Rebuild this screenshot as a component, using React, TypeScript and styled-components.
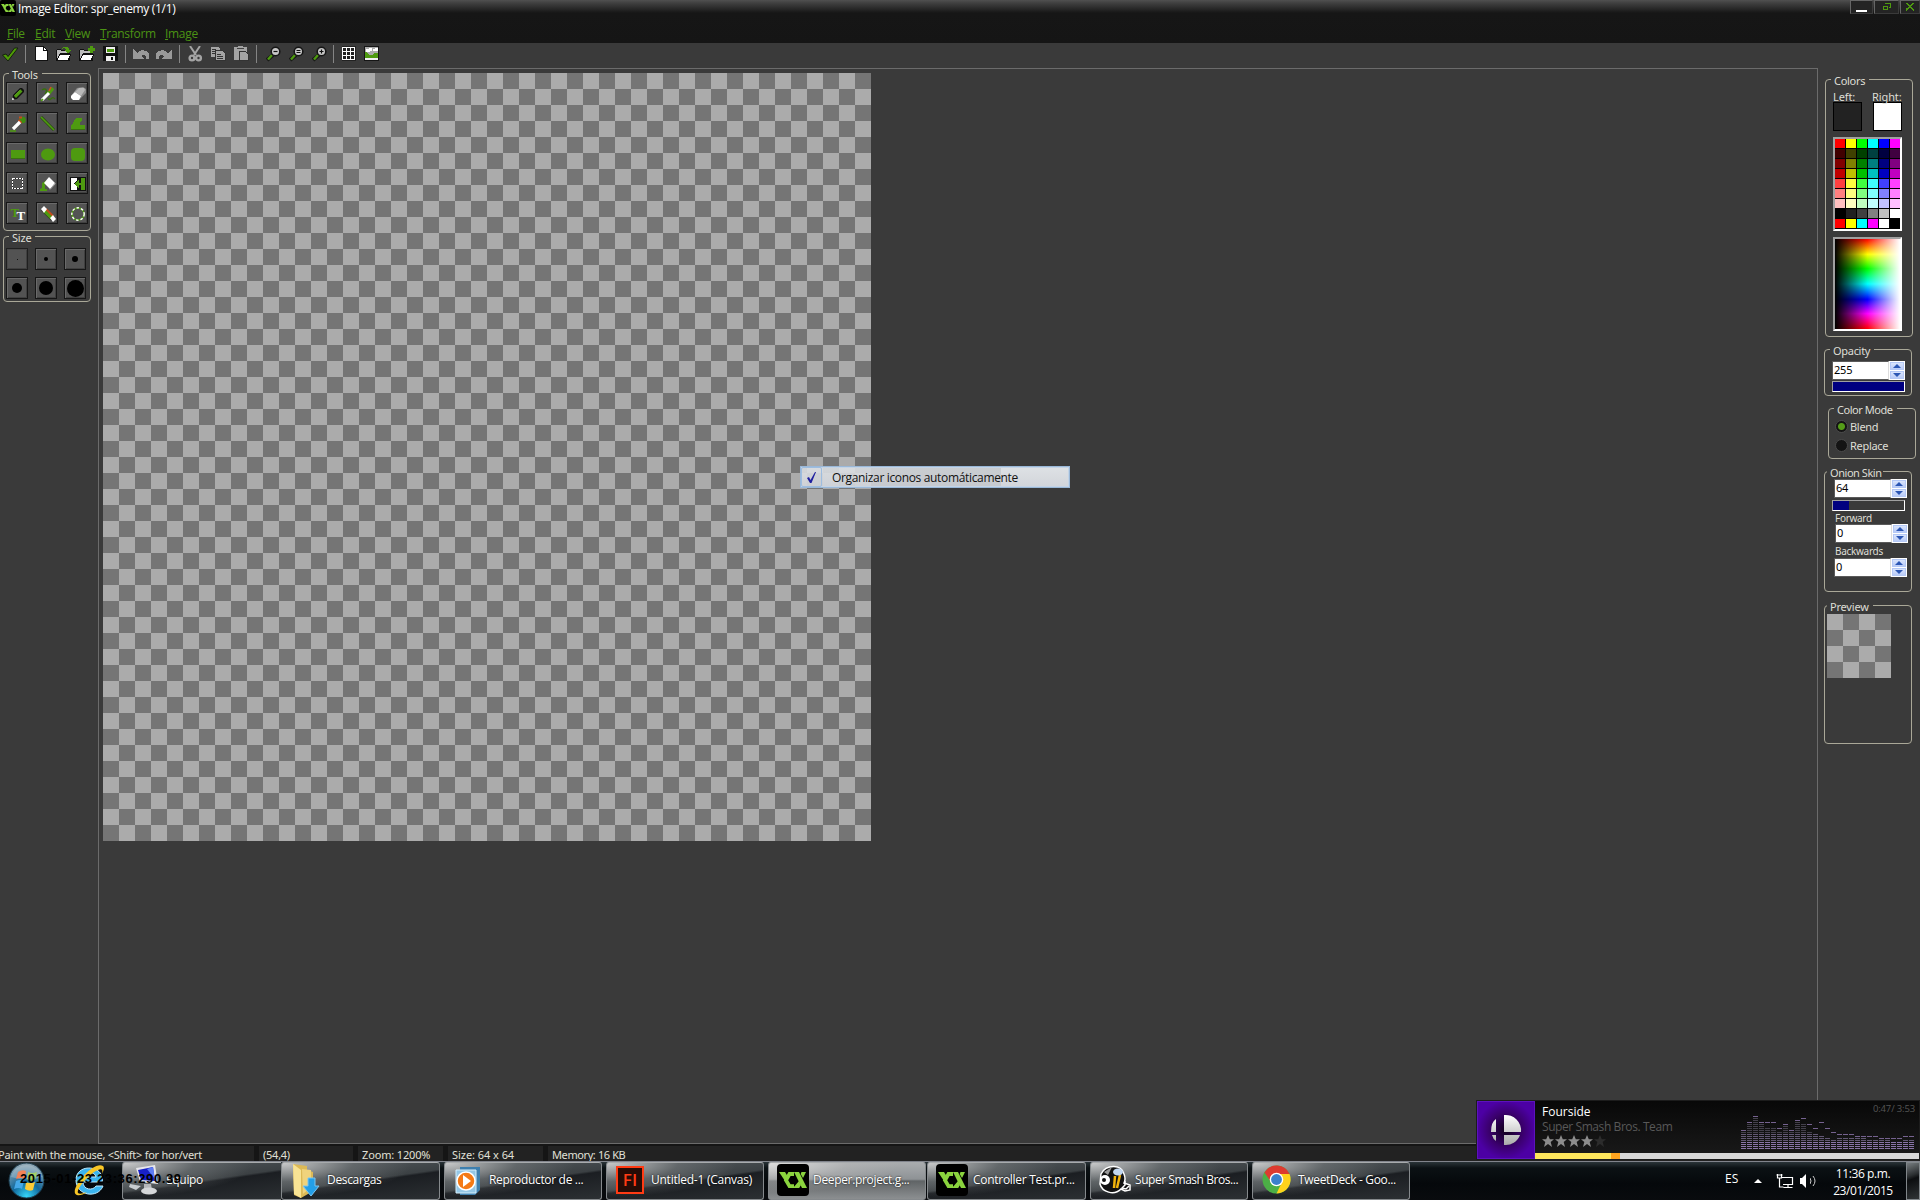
import React from "react";
import styled, { createGlobalStyle, css } from "styled-components";

const segoe = `"Open Sans", "Noto Sans", sans-serif`;
const tahoma = `"Noto Sans", "Open Sans", sans-serif`;

const Global = createGlobalStyle`
  * { box-sizing: border-box; }
  html, body { margin: 0; padding: 0; background: #3a3a3a; overflow: hidden; }
  svg { display: block; flex: none; }
`;

const Screen = styled.div`
  position: relative;
  display: flex;
  flex-direction: column;
  width: 1920px;
  height: 1200px;
  background: #3a3a3a;
  overflow: hidden;
  font-family: ${segoe};
  font-size: 12px;
  white-space: nowrap;
`;

/* ---------- title and menu ---------- */

const Header = styled.header`
  height: 43px;
  background: linear-gradient(#505050 0, #404040 3px, #161616 13px, #151515 100%);
`;
const TitleBar = styled.div`
  display: flex;
  height: 20px;
`;
const TitleText = styled.div`
  flex: 1;
  padding-left: 2px;
  color: #fff;
  font-size: 12px;
  line-height: 18px;
  letter-spacing: -0.32px;
`;
const WindowButton = styled.div<{ $w: number }>`
  width: ${(p) => p.$w}px;
  height: 14px;
  margin-right: ${(p) => (p.$w === 20 ? 0 : 1)}px;
  display: flex;
  align-items: center;
  justify-content: center;
  background: #242424;
  border: 1px solid #3a3a3a;
  border-top-color: #666;
  border-left-color: #666;
`;
const MenuBar = styled.nav`
  display: flex;
  height: 23px;
  padding: 4px 0 0 7px;
  color: #4c9414;
  line-height: 19px;
`;
const MenuItem = styled.div<{ $w: number }>`
  width: ${(p) => p.$w}px;
  letter-spacing: -0.3px;
  &::first-letter { text-decoration: underline; }
`;

/* ---------- toolbar ---------- */

const Toolbar = styled.div`
  display: flex;
  align-items: flex-start;
  height: 25px;
  padding: 3px 0 0 1px;
`;
const ToolbarSlot = styled.div<{ $w: number }>`
  width: ${(p) => p.$w}px;
`;
const Separator = styled.div<{ $after: number }>`
  width: 1px;
  height: 18px;
  margin: -1px ${(p) => p.$after}px 0 0;
  background: #858585;
`;

/* ---------- work area ---------- */

const Body = styled.div`
  display: flex;
  height: 1076px;
`;
const LeftPanel = styled.aside`
  width: 98px;
  padding: 5px 0 0 3px;
  display: flex;
  flex-direction: column;
  gap: 5px;
`;
const checker = css`
  background: repeating-conic-gradient(#757575 0 25%, #ababab 0 50%) 0 0 / 32px 32px;
`;
const Workspace = styled.main`
  flex: 1;
  border: 1px solid #6b6b6b;
  padding: 4px;
`;
const Canvas = styled.div`
  width: 768px;
  height: 768px;
  ${checker}
`;
const RightPanel = styled.aside`
  width: 102px;
  padding: 11px 0 0 6px;
  font-family: ${tahoma};
  font-size: 11px;
  color: #deded6;
`;

const Group = styled.section<{ $h: number; $w?: number; $top?: number; $left?: number }>`
  position: relative;
  width: ${(p) => p.$w ?? 88}px;
  height: ${(p) => p.$h}px;
  margin: ${(p) => p.$top ?? 0}px 0 0 ${(p) => p.$left ?? 0}px;
  border: 1px solid #aaa898;
  border-radius: 4px;
`;
const Legend = styled.div<{ $x: number; $pr?: number; $ls?: number }>`
  position: absolute;
  left: ${(p) => p.$x}px;
  top: -6px;
  height: 13px;
  padding: 0 ${(p) => p.$pr ?? 4}px 0 3px;
  background: #3a3a3a;
  color: #deded6;
  font: 11px/13px ${tahoma};
  letter-spacing: ${(p) => p.$ls ?? -0.2}px;
`;

const ButtonGrid = styled.div<{ $gap: number; $top: number }>`
  display: grid;
  grid-template-columns: repeat(3, 22px);
  column-gap: ${(p) => p.$gap}px;
  row-gap: ${(p) => p.$gap}px;
  padding: ${(p) => p.$top}px 0 0 2px;
`;
const ToolButton = styled.div<{ $on?: boolean; $nudge?: boolean }>`
  width: 22px;
  height: 22px;
  display: flex;
  align-items: center;
  justify-content: center;
  padding: ${(p) => (p.$nudge ? "1px 0 0 2px" : "0")};
  background: #535353;
  border: 1px solid ${(p) => (p.$on ? "#202020" : "#161616")};
  box-shadow: inset 1px 1px 0 ${(p) => (p.$on ? "#4a4a4a" : "#6a6a6a")}, inset -1px -1px 0 #404040;
`;
const Dot = styled.div<{ $d: number }>`
  width: ${(p) => p.$d}px;
  height: ${(p) => p.$d}px;
  border-radius: 50%;
  background: #000;
`;

/* ---------- colour group ---------- */

const ColorsInner = styled.div`
  padding: 10px 0 0 7px;
`;
const SwatchRow = styled.div`
  display: flex;
  gap: 11px;
`;
const SwatchCell = styled.div`
  width: 29px;
  line-height: 13px;
  font-size: 11px;
  letter-spacing: -0.1px;
`;
const SwatchLabel = styled.div<{ $shift?: boolean }>`
  height: 12px;
  ${(p) => p.$shift && "margin-left: -1px;"}
`;
const Swatch = styled.div<{ $c: string }>`
  width: 29px;
  height: 29px;
  background: ${(p) => p.$c};
  border: 1px solid #000;
`;
const Sunken = styled.div<{ $mt: number }>`
  width: 69px;
  height: 94px;
  margin-top: ${(p) => p.$mt}px;
  border: 2px solid #fff;
  border-top-color: #a0a0a0;
  border-left-color: #a0a0a0;
`;
const Palette = styled.div`
  display: grid;
  grid-template-columns: repeat(6, 10px);
  grid-template-rows: repeat(9, 9px);
  gap: 1px;
  height: 90px;
  background: #000;
`;
const Cell = styled.div<{ $c: string }>`
  background: ${(p) => p.$c};
`;
const Spectrum = styled.div`
  height: 90px;
  background: linear-gradient(90deg, rgba(255, 255, 255, 0) 50%, #fff),
    linear-gradient(90deg, #000, rgba(0, 0, 0, 0) 50%),
    linear-gradient(#f00, #ff0 17%, #0f0 33%, #0ff 50%, #00f 67%, #f0f 83%, #f00);
`;

/* ---------- numeric fields ---------- */

const Field = styled.div<{ $top: number; $left: number }>`
  display: flex;
  width: 74px;
  height: 19px;
  margin: ${(p) => p.$top}px 0 0 ${(p) => p.$left}px;
`;
const Input = styled.div`
  width: 57px;
  height: 19px;
  padding-left: 1px;
  background: #fff;
  border: 1px solid #5a5a5a;
  border-right-color: #ddd;
  color: #000;
  font: 11px/16px ${tahoma};
  letter-spacing: -0.2px;
`;
const Spinner = styled.div`
  width: 16px;
  height: 19px;
  background: #fff;
  padding: 1px;
  display: flex;
  flex-direction: column;
  gap: 1px;
`;
const SpinButton = styled.div`
  flex: 1;
  display: flex;
  align-items: center;
  justify-content: center;
  border: 1px solid #b4c8f6;
  background: linear-gradient(#d9e4fc, #b9cbf7);
`;
const Bar = styled.div<{ $top: number }>`
  width: 73px;
  height: 11px;
  margin: ${(p) => p.$top}px 0 0 7px;
  border: 1px solid #fff;
  border-top-color: #a0a0a0;
  border-left-color: #a0a0a0;
`;
const BarFill = styled.div<{ $w: number }>`
  width: ${(p) => p.$w}px;
  height: 9px;
  background: #000080;
`;
const SmallLabel = styled.div<{ $top: number }>`
  height: 12px;
  margin: ${(p) => p.$top}px 0 0 10px;
  font-size: 10px;
  line-height: 11px;
  letter-spacing: -0.3px;
`;
const RadioRow = styled.div<{ $top: number }>`
  display: flex;
  align-items: center;
  gap: 2px;
  height: 14px;
  margin: ${(p) => p.$top}px 0 0 6px;
  letter-spacing: -0.3px;
`;
const Radio = styled.div<{ $on?: boolean }>`
  width: 13px;
  height: 13px;
  border-radius: 50%;
  border: 1px solid #4a4a4a;
  background: ${(p) => (p.$on ? "radial-gradient(circle, #549c18 0 3px, #141414 4px)" : "#141414")};
`;
const PreviewChecker = styled.div`
  width: 64px;
  height: 64px;
  margin: 8px 0 0 2px;
  ${checker}
`;

/* ---------- status bar ---------- */

const StatusBar = styled.footer`
  display: flex;
  height: 17px;
  padding-top: 2px;
  background: #151515;
  gap: 5px;
`;
const StatusCell = styled.div<{ $w?: number; $pad: number; $ls?: number }>`
  ${(p) => (p.$w ? `width: ${p.$w}px;` : "flex: 1;")}
  padding-left: ${(p) => p.$pad}px;
  text-indent: ${(p) => (p.$pad ? 0 : -2)}px;
  background: #222;
  color: #e0e0d8;
  font: 11px/17px ${tahoma};
  height: 15px;
  letter-spacing: ${(p) => p.$ls ?? -0.25}px;
`;

/* ---------- taskbar ---------- */

const Taskbar = styled.div`
  display: flex;
  height: 39px;
  background: linear-gradient(#2a3438, #0b1114 6px, #05080b 22px, #090b0e);
  border-top: 1px solid #81848c;
`;
const Launchers = styled.div`
  display: flex;
  width: 122px;
  height: 38px;
  padding: 0 0 2px 8px;
  gap: 27px;
  align-items: center;
`;
const Task = styled.div<{ $w: number; $gap?: number; $active?: boolean; $join?: boolean; $lead?: number }>`
  display: flex;
  align-items: center;
  width: ${(p) => p.$w}px;
  height: 38px;
  margin-right: ${(p) => p.$gap ?? 4}px;
  padding: 0 0 3px ${(p) => p.$lead ?? 9}px;
  border: 1px solid #85898c;
  border-top-color: #a8abad;
  ${(p) => p.$join && "border-right: 0;"}
  border-radius: ${(p) => (p.$join ? "3px 0 0 3px" : "3px")};
  color: #fff;
  background: ${(p) =>
    p.$active
      ? "radial-gradient(ellipse 130px 30px at 0 0, #ddd 0, rgba(190,190,190,.4) 60%, transparent), linear-gradient(#a9acae, #8e9295 45%, #606466 50%, #8c8f91)"
      : "radial-gradient(ellipse 130px 34px at 0 0, rgba(220,220,220,.85) 0, rgba(120,124,126,.5) 55%, transparent), linear-gradient(172deg, #596064 0, #3b4043 49%, #1b1e22 53%, #2c3033)"};
`;
const TaskIcon = styled.div<{ $w: number }>`
  width: ${(p) => p.$w}px;
`;
const TaskLabel = styled.div<{ $ls?: number }>`
  letter-spacing: ${(p) => p.$ls ?? -0.33}px;
  text-shadow: 0 0 2px #000;
`;
const Tray = styled.div`
  margin-left: auto;
  display: flex;
  align-items: center;
  color: #fff;
`;
const Language = styled.div`
  width: 29px;
  margin-top: -6px;
`;
const Clock = styled.div`
  width: 76px;
  margin: 1px 5px 0 7px;
  text-align: center;
  line-height: 17px;
  letter-spacing: -0.4px;
`;
const ShowDesktop = styled.div`
  width: 14px;
  height: 38px;
  border: 1px solid #80868a;
  background: linear-gradient(160deg, #777d80 0, #2a2e30 35%, #0c0e10 45%, #303436);
`;

/* ---------- overlays ---------- */

const ContextMenu = styled.div`
  position: absolute;
  left: 800px;
  top: 466px;
  width: 270px;
  height: 22px;
  display: flex;
  border: 1px solid #9ab8d8;
  background: linear-gradient(rgba(222, 226, 230, 0.88), rgba(209, 212, 218, 0.93)),
    linear-gradient(#ddd, #ddd) 200px 0 no-repeat;
  color: #111;
  line-height: 21px;
  box-shadow: inset 0 0 0 1px #c4d4e6;
`;
const MenuCheck = styled.div`
  width: 21px;
  height: 20px;
  margin-right: 10px;
  display: flex;
  align-items: center;
  justify-content: center;
  border: 1px solid #9dbde0;
  border-radius: 2px;
`;
const MenuLabel = styled.div`
  letter-spacing: -0.34px;
`;
const Stamp = styled.div`
  position: absolute;
  left: 20px;
  top: 1170px;
  color: #000;
  font: 700 13px/17px "Liberation Sans", sans-serif;
  letter-spacing: 0.62px;
`;
const Player = styled.div`
  position: absolute;
  left: 1476px;
  top: 1100px;
  width: 444px;
  height: 60px;
  display: flex;
  padding: 1px;
  background: #1c1c1c;
`;
const PlayerMain = styled.div`
  flex: 1;
  display: flex;
  flex-direction: column;
  background: linear-gradient(#080808, #1a1a1a);
`;
const PlayerInfo = styled.div`
  display: flex;
  height: 52px;
`;
const TrackText = styled.div`
  flex: 1;
  padding: 3px 0 0 7px;
  line-height: 15px;
  color: #fff;
`;
const Artist = styled.div`
  height: 16px;
  color: #585858;
  letter-spacing: -0.42px;
`;
const PlayerRight = styled.div`
  width: 178px;
  display: flex;
  flex-direction: column;
  align-items: flex-end;
  padding: 1px 4px 0 0;
  color: #555;
  font-size: 9.5px;
  line-height: 14px;
  letter-spacing: -0.15px;
`;
const Progress = styled.div`
  height: 6px;
  background: linear-gradient(90deg, #fee65c 76px, #ffa51f 76px 85px, #d8d8d8 85px);
`;

/* ---------- icons ---------- */

const G = "#4e9a10";
type IconProps = { children: React.ReactNode; w?: number; h?: number; smooth?: boolean };
const Icon = ({ children, w = 16, h = 16, smooth }: IconProps) => (
  <svg width={w} height={h} viewBox={`0 0 ${w} ${h}`} shapeRendering={smooth ? "auto" : "crispEdges"} fill="none">
    {children}
  </svg>
);

const GmLogo = ({ size }: { size: number }) => (
  <svg width={size} height={size} viewBox="0 0 32 32" fill="none">
    <rect width="32" height="32" rx="4" fill="#000" />
    <path d="M2 8h6l2.500 4L8 17z" fill="#8ad33e" />
    <path d="M17 10h-4.500L9 16.200l3.500 6H17" stroke="#8ad33e" strokeWidth="3.800" />
    <path d="M17 8h5l8 16h-5z" fill="#8ad33e" />
    <path d="M24.500 8H29l-3 6-2.300-4zM22 17l2 4-1.800 3H16z" fill="#8ad33e" />
  </svg>
);

const Magnifier = ({ mark }: { mark: string }) => (
  <Icon smooth>
    <path d="M7 9 1 14" stroke="#161616" strokeWidth="4" />
    <path d="M6 9 2 13.500" stroke={G} strokeWidth="2.400" />
    <circle cx="9.500" cy="5.500" r="4.300" fill="#c8c8c8" stroke="#161616" strokeWidth="1.600" />
    <path d={mark} stroke="#111" strokeWidth="1.200" />
  </Icon>
);

const Folder = ({ children }: { children: React.ReactNode }) => (
  <Icon>
    <path d="M0 4h1V3h4v1h7v3h2v8H1v-1H0z" fill="#111" />
    <path d="M1 4h4v1h6v2H4L2 12H1z" fill="#bbb" />
    <path d="M4 8h11l-3 6H1z" fill="#fff" stroke="#111" />
    {children}
  </Icon>
);

const icons = {
  check: (
    <Icon w={18} smooth>
      <path d="M1.500 9 5 8l2 2.500L13.500 2H17L7 15z" fill="#4e9a06" stroke="#162010" />
    </Icon>
  ),
  file: (
    <Icon w={13}>
      <path d="M.5.500h8l4 4v10H.5z" fill="#fff" stroke="#111" />
      <path d="M8.500.500v4h4" stroke="#111" />
    </Icon>
  ),
  open: (
    <Folder>
      <path d="M6 2c3-3 7-1 7 2h2l-3 4-4-4h2c0-2-2-2-4-1z" fill={G} />
    </Folder>
  ),
  add: (
    <Folder>
      <path d="M11 0h3v2h2v3h-2v2h-3V5H9V2h2z" fill={G} />
    </Folder>
  ),
  save: (
    <Icon>
      <path d="M0 0h14l1 1v14H0z" fill="#111" />
      <path d="M3 1h9v6H3zM3 10h9v5H3z" fill="#eee" />
      <path d="M4 3h7v3H4z" fill={G} />
      <path d="M8 11h2v3H8z" fill="#111" />
    </Icon>
  ),
  undo: (
    <Icon>
      <path d="M0 3l4 4c3-4 10-4 12 1v5h-3c1-3-2-5-5-3l3 3H0z" fill="#999" />
    </Icon>
  ),
  redo: (
    <Icon>
      <path d="M16 3l-4 4C9 3 2 3 0 8v5h3c-1-3 2-5 5-3l-3 3h11z" fill="#999" />
    </Icon>
  ),
  cut: (
    <Icon smooth>
      <path d="M2 0l6 9M12 0L6 9" stroke="#a4a4a4" strokeWidth="2" />
      <circle cx="4" cy="12" r="2.400" stroke="#a4a4a4" strokeWidth="2.400" />
      <circle cx="10.500" cy="12" r="2.400" stroke="#a4a4a4" strokeWidth="2.400" />
    </Icon>
  ),
  copy: (
    <Icon>
      <path d="M.5.500h7l2 2v8h-9z" fill="#a4a4a4" />
      <path d="M5.500 4.500h7l3 3v7h-10z" fill="#a4a4a4" stroke="#333" />
      <path d="M2 3.500h4M2 5.500h3M2 7.500h3M7 8.500h4M7 10.500h6M7 12.500h6" stroke="#333" />
    </Icon>
  ),
  paste: (
    <Icon>
      <path d="M0 1h4V0h5v1h4v13H0z" fill="#a4a4a4" />
      <path d="M3 2.500h7" stroke="#444" />
      <path d="M5.500 5.500h6l3 3v6h-9z" fill="#a4a4a4" stroke="#333" />
    </Icon>
  ),
  grid: (
    <Icon>
      <path d="M1 0h14v15H1z" fill="#222" />
      <path d="M1.500 1v13M5.500 1v13M9.500 1v13M13.500 1v13M1 1.500h13M1 5.500h13M1 9.500h13M1 13.500h13" stroke="#fff" />
    </Icon>
  ),
  image: (
    <Icon>
      <path d="M0 0h15v15H0z" fill="#151515" />
      <path d="M1 1h13v10H1z" fill="#aaa" />
      <path d="M2 3h3V2h3v3H6v1H2zM9 3h2V2h3v3H9z" fill="#fff" />
      <path d="M1 6h2l2 3h3l3-2h3v5H1z" fill={G} />
      <path d="M1 12h13v2H1z" fill="#eee" />
    </Icon>
  ),
};

const tools: React.ReactNode[] = [
  <Icon smooth>
    <path d="M2 14l1-5 7-7h2l2 2v2l-7 7z" fill="#111" />
    <path d="M4 10 10.500 3.500l2 2L6 12z" fill={G} />
    <path d="M4.500 9.700 10.500 3.700" stroke="#6aba24" strokeWidth=".8" />
    <path d="M2 14l.5-2.500 2 2z" fill="#fff" />
  </Icon>,
  <Icon smooth>
    <path d="M2 4c4-3 6 1 3 4M8 12c1 3 3 1 4 0s2 0 3 1" stroke="#37700c" strokeWidth="1.400" />
    <path d="M8 8 13 2" stroke={G} strokeWidth="3.600" />
    <path d="M11 1l-2 4" stroke="#d05020" strokeWidth="1.500" />
    <path d="M2 14 9 7" stroke="#fff" strokeWidth="3" />
    <path d="M1 15l2-2" stroke={G} strokeWidth="1.600" />
  </Icon>,
  <Icon smooth>
    <path d="M1 10 7 2l6-1 3 2v4l-7 7H4z" fill="#8c8c8c" />
    <path d="M1 10 5 6l6 4-2 4H3l-2-2z" fill="#fff" />
    <path d="M5 6l4-4h5l1 2-4 6z" fill="#b8b8b8" />
  </Icon>,
  <Icon smooth>
    <circle cx="12.500" cy="4" r="3.200" fill="#3f8c10" />
    <path d="M9 1.500h3M8.500 4l3 3" stroke="#c54b1c" strokeWidth="2" />
    <path d="M3 13 10 6" stroke="#fff" strokeWidth="3.200" />
    <path d="M0 15h6" stroke={G} strokeWidth="1.500" />
  </Icon>,
  <Icon smooth>
    <path d="M1 1 14 14" stroke="#294b10" strokeWidth="3" />
    <path d="M1 1 14 14" stroke={G} strokeWidth="1.700" />
  </Icon>,
  <Icon>
    <path d="M1 14V10l5-8h6v2l-2 3v2h5v5z" fill={G} />
    <path d="M1 13.500h14" stroke="#39700f" />
  </Icon>,
  <Icon>
    <path d="M1 4h14v9H1z" fill={G} />
    <path d="M1 12.500h14" stroke="#39700f" />
  </Icon>,
  <Icon smooth>
    <ellipse cx="8" cy="8.500" rx="7" ry="6" fill={G} />
  </Icon>,
  <Icon smooth>
    <rect x="1" y="2" width="14" height="13" rx="4" fill={G} />
  </Icon>,
  <Icon>
    <path d="M2.500 2.500h10v10h-10z" stroke="#222" />
    <path d="M2.500 2.500h10v10h-10z" stroke="#fff" strokeDasharray="2 1" />
  </Icon>,
  <Icon smooth>
    <path d="M0 15v-2l2-1V7l5-3v3L5 9v4h2v2z" fill={G} />
    <path d="M4 7 9 1l6 6-5 6z" fill="#fff" />
    <path d="M10 13.500l5.500-6" stroke="#aaa" />
  </Icon>,
  <Icon>
    <path d="M0 1h16v14H0z" fill="#111" />
    <path d="M1 2h6v2L4 8l3 3v3H1z" fill="#fff" />
    <path d="M4 8l5-4v3h2V2h4v12h-4V9H9v3z" fill={G} />
  </Icon>,
  <Icon w={18} smooth>
    <text x="1.500" y="11" fontFamily="Liberation Serif" fontWeight="700" fontSize="13" fill={G}>T</text>
    <text x="7.500" y="14" fontFamily="Liberation Serif" fontWeight="700" fontSize="13" fill="#fff">T</text>
  </Icon>,
  <Icon smooth>
    <path d="M3 3l10 10" stroke="#222" strokeWidth="5" />
    <path d="M4 4l8 8" stroke={G} strokeWidth="4" />
    <path d="M6 3l7 7" stroke="#c54b1c" strokeWidth="1.800" />
    <path d="M1 3l3-3 3 3-3 4zM10 12l3-3 3 4-3 3z" fill="#fff" />
  </Icon>,
  <Icon smooth>
    <circle cx="8" cy="8" r="6" stroke={G} strokeWidth="1.500" />
    <circle cx="8" cy="8" r="6.200" stroke="#fff" strokeWidth="1.400" strokeDasharray="2.500 2" />
  </Icon>,
];

const StartOrb = () => (
  <svg width="37" height="37" viewBox="0 0 37 37">
    <defs>
      <radialGradient id="orb" cx=".5" cy=".95" r=".9">
        <stop offset="0" stopColor="#35d7fa" />
        <stop offset=".45" stopColor="#12689c" />
        <stop offset="1" stopColor="#8ba4b2" />
      </radialGradient>
    </defs>
    <circle cx="18.500" cy="18.500" r="17.500" fill="url(#orb)" stroke="#1c3a4a" />
    <path d="M10 10q4-3 8-1l-1 8q-4-2-9 0z" fill="#f0602a" />
    <path d="M20 10q4 2 9 0l-2 8q-4 2-8-1z" fill="#8dc63c" />
    <path d="M8 19q4-2 8 0l-2 8q-3-2-8 0z" fill="#45a8e8" />
    <path d="M18 20q4 2 9 0l-2 8q-4 2-8-1z" fill="#fdcb35" />
    <path d="M3 15a16 16 0 0 1 31 0q-15 5-31 0z" fill="#fff" opacity=".22" />
  </svg>
);
const Explorer = () => (
  <svg width="34" height="36" viewBox="0 0 34 36" fill="none">
    <path d="M27 20H11c0 8 10 9 13 4h7c-5 13-27 10-27-6S28 3 30 15c.5 2 .5 4 0 5zM12 15h12c-1-6-11-6-12 0z" fill="#3bb4ee" stroke="#bfeaff" />
    <path d="M5 33C-5 30 21-2 31 4c2 2 0 6-1 8 1-4 0-6-4-4C16 12 4 28 6 31q2 2 9-1-6 4-10 3z" fill="#f8c626" />
  </svg>
);
const Computer = () => (
  <svg width="34" height="34" viewBox="0 0 34 34">
    <path d="M7 5l19-3 3 19-18-2z" fill="#e6e6ea" />
    <path d="M9 7l15-3 2 14-14-1z" fill="#1820c8" />
    <path d="M18 6l6-2 2 12z" fill="#5d7df4" />
    <path d="M15 21h7l1 6h-8z" fill="#b6b8bb" />
    <ellipse cx="20" cy="28" rx="8" ry="3.500" fill="#d5d7d9" />
    <path d="M1 21l11 2-5 4-7-3z" fill="#c8ccd0" />
  </svg>
);
const Downloads = () => (
  <svg width="34" height="38" viewBox="0 0 34 38">
    <path d="M3 3l14 2v4l6 2v19l-12 7-7-3z" fill="#dcb956" />
    <path d="M3 3l8 6v28l-7-4z" fill="#f8e394" />
    <path d="M12 8l9 1v17l-8 7z" fill="#f0d37c" />
    <path d="M18 17h7v8h4l-8 10-8-10h5z" fill="#239fe8" stroke="#7cc4f0" />
  </svg>
);
const MediaPlayer = () => (
  <svg width="28" height="32" viewBox="0 0 28 32">
    <path d="M6 3h20v23l-5 5H6z" fill="#3e7fae" />
    <path d="M2 6h20v23H2z" fill="#94c7e6" stroke="#d5effc" />
    <circle cx="12" cy="17" r="9" fill="#f47a16" stroke="#fff" strokeWidth="1.500" />
    <path d="M9 11l8 6-8 6z" fill="#fff" />
  </svg>
);
const FlBox = styled.div`
  width: 28px;
  height: 28px;
  border: 2px solid #ff3b14;
  background: #260c06;
  color: #ff3b14;
  font: 600 17px/23px "Open Sans", sans-serif;
  text-align: center;
  letter-spacing: 0.3px;
`;
const Bee = () => (
  <svg width="34" height="32" viewBox="0 0 34 32" fill="none">
    <path d="M3 10C8 0 24 0 26 10q2 5 0 9l6 2v5l-5 1-4-2C16 32 4 28 2 20z" fill="#111" stroke="#fff" strokeWidth="1.500" />
    <path d="M6 8l8-5-4 8z" fill="#999" />
    <path d="M17 12l-1 12M22 11l-3 13" stroke="#f2b40c" strokeWidth="2.500" />
    <ellipse cx="20" cy="8" rx="5" ry="3.500" fill="#c2d7f0" />
    <circle cx="7" cy="16" r="5" fill="#fff" />
    <circle cx="6" cy="16" r="2" fill="#111" />
    <path d="M27 17v4l-3 3 4 1 3-3" stroke="#fff" strokeWidth="1.500" />
  </svg>
);
const Chrome = () => (
  <svg width="29" height="29" viewBox="0 0 29 29">
    <circle cx="14.500" cy="14.500" r="14" fill="#4caf46" />
    <path d="M2.500 7.500A14 14 0 0 1 27.500 9h-13L9 17z" fill="#dd3a30" />
    <path d="M27.500 9a14 14 0 0 1-13 19.500L20 17 16 9z" fill="#fed21b" />
    <circle cx="14.500" cy="14.500" r="6.800" fill="#fff" />
    <circle cx="14.500" cy="14.500" r="5.400" fill="#3b80cc" />
  </svg>
);
const SmashArt = () => (
  <svg width="58" height="58" viewBox="0 0 58 58">
    <defs>
      <radialGradient id="art">
        <stop offset="0" stopColor="#100018" />
        <stop offset=".6" stopColor="#3b006e" />
        <stop offset="1" stopColor="#4c00a4" />
      </radialGradient>
      <linearGradient id="ball" x2="0" y2="1">
        <stop stopColor="#fff" />
        <stop offset="1" stopColor="#aaa" />
      </linearGradient>
    </defs>
    <rect width="58" height="58" fill="url(#art)" />
    <path d="M27 14a15.500 15.500 0 0 1 17 17H27zM27 34h16a15 15 0 0 1-16 10zM14 31q0-10 5-13v13zM15 34h4v6q-3-2-4-6z" fill="url(#ball)" />
    <rect x=".5" y=".5" width="57" height="57" fill="none" stroke="#5c12bd" />
  </svg>
);

const starPath = "M6 0l1.800 4.200H12L8.700 7l1.300 5-4-3-4 3 1.300-5L0 4.200h4.200z";
const Stars = () => (
  <svg width="66" height="13" viewBox="0 0 66 13">
    {[0, 1, 2, 3, 4].map((i) => (
      <path key={i} d={starPath} transform={`translate(${i * 13} 0)`} fill={i < 4 ? "#8c8c8c" : "#2c2c2c"} />
    ))}
  </svg>
);

const peaks = [20, 28, 34, 28, 28, 28, 22, 26, 20, 30, 32, 26, 22, 28, 22, 18, 16, 16, 16, 14, 14, 14, 14, 12, 12, 12, 12, 14, 14];
const levels = [18, 26, 32, 26, 22, 22, 18, 24, 18, 28, 26, 18, 16, 14, 12, 10, 12, 12, 12, 12, 12, 10, 10, 10, 10, 8, 8, 10, 10];
const Equalizer = () => (
  <svg width="174" height="36" viewBox="0 0 174 36" shapeRendering="crispEdges">
    {peaks.map((p, i) => (
      <g key={i}>
        {Array.from({ length: levels[i] / 2 }, (_, j) => (
          <rect key={j} x={i * 6} y={32 - j * 2} width="5" height="1" fill={j < 4 ? "#8873a8" : j < 8 ? "#625874" : "#44404c"} />
        ))}
        <rect x={i * 6} y={34 - p} width="5" height="1" fill="#75628f" />
      </g>
    ))}
  </svg>
);

const Arrows = () => (
  <Spinner>
    <SpinButton>
      <svg width="8" height="4" viewBox="0 0 8 4"><path d="M0 4 4 0l4 4z" fill="#2b56b4" /></svg>
    </SpinButton>
    <SpinButton>
      <svg width="8" height="4" viewBox="0 0 8 4"><path d="M0 0l4 4 4-4z" fill="#2b56b4" /></svg>
    </SpinButton>
  </Spinner>
);
const NumberField = ({ value, top, left }: { value: string; top: number; left: number }) => (
  <Field $top={top} $left={left}>
    <Input>{value}</Input>
    <Arrows />
  </Field>
);

const palette = [
  "#f00", "#ff0", "#0f0", "#0ff", "#00f", "#f0f",
  "#400000", "#404000", "#004000", "#004040", "#000040", "#400040",
  "#800000", "#808000", "#008000", "#008080", "#000080", "#800080",
  "#c00000", "#c0c000", "#00c000", "#00c0c0", "#0000c0", "#c000c0",
  "#ff4040", "#ffff40", "#40ff40", "#40ffff", "#4040ff", "#ff40ff",
  "#ff8080", "#ffff80", "#80ff80", "#80ffff", "#8080ff", "#ff80ff",
  "#ffc0c0", "#ffffc0", "#c0ffc0", "#c0ffff", "#c0c0ff", "#ffc0ff",
  "#000", "#202020", "#404040", "#808080", "#c0c0c0", "#fff",
  "#f00", "#ff0", "#0ff", "#f0f", "#fff", "#000",
];

export default function App() {
  return (
    <>
      <Global />
      <Screen>
        <Header>
          <TitleBar>
            <GmLogo size={16} />
            <TitleText>Image Editor: spr_enemy (1/1)</TitleText>
            <WindowButton $w={23}>
              <Icon w={11} h={12}><path d="M0 9h11v2H0z" fill="#fff" /></Icon>
            </WindowButton>
            <WindowButton $w={25}>
              <Icon w={8} h={8}><path d="M.5 3.500h4v3h-4zM2.500 1V.5h5v4H6" stroke={G} /></Icon>
            </WindowButton>
            <WindowButton $w={20}>
              <Icon w={10} h={8}><path d="M1 0l8 7M9 0L1 7" stroke={G} strokeWidth="1.600" /></Icon>
            </WindowButton>
          </TitleBar>
          <MenuBar>
            <MenuItem $w={28}>File</MenuItem>
            <MenuItem $w={30}>Edit</MenuItem>
            <MenuItem $w={35}>View</MenuItem>
            <MenuItem $w={65}>Transform</MenuItem>
            <MenuItem $w={40}>Image</MenuItem>
          </MenuBar>
        </Header>

        <Toolbar>
          <ToolbarSlot $w={24}>{icons.check}</ToolbarSlot>
          <Separator $after={9} />
          <ToolbarSlot $w={21}>{icons.file}</ToolbarSlot>
          <ToolbarSlot $w={23}>{icons.open}</ToolbarSlot>
          <ToolbarSlot $w={24}>{icons.add}</ToolbarSlot>
          <ToolbarSlot $w={22}>{icons.save}</ToolbarSlot>
          <Separator $after={7} />
          <ToolbarSlot $w={23}>{icons.undo}</ToolbarSlot>
          <ToolbarSlot $w={23}>{icons.redo}</ToolbarSlot>
          <Separator $after={8} />
          <ToolbarSlot $w={22}>{icons.cut}</ToolbarSlot>
          <ToolbarSlot $w={24}>{icons.copy}</ToolbarSlot>
          <ToolbarSlot $w={22}>{icons.paste}</ToolbarSlot>
          <Separator $after={9} />
          <ToolbarSlot $w={23}><Magnifier mark="M7.500 5.500h4" /></ToolbarSlot>
          <ToolbarSlot $w={23}><Magnifier mark="M7.500 4.500h4M7.500 6.500h4" /></ToolbarSlot>
          <ToolbarSlot $w={21}><Magnifier mark="M7.500 5.500h4M9.500 3.500v4" /></ToolbarSlot>
          <Separator $after={7} />
          <ToolbarSlot $w={23}>{icons.grid}</ToolbarSlot>
          <ToolbarSlot $w={16}>{icons.image}</ToolbarSlot>
        </Toolbar>

        <Body>
          <LeftPanel>
            <Group $h={158}>
              <Legend $x={5}>Tools</Legend>
              <ButtonGrid $gap={8} $top={8}>
                {tools.map((icon, i) => (
                  <ToolButton key={i} $nudge>{icon}</ToolButton>
                ))}
              </ButtonGrid>
            </Group>
            <Group $h={66}>
              <Legend $x={5}>Size</Legend>
              <ButtonGrid $gap={7} $top={11}>
                {[1, 4, 6, 10, 14, 17].map((d, i) => (
                  <ToolButton key={d} $on={i === 0}>
                    <Dot $d={d} />
                  </ToolButton>
                ))}
              </ButtonGrid>
            </Group>
          </LeftPanel>

          <Workspace>
            <Canvas />
          </Workspace>

          <RightPanel>
            <Group $h={258} $left={1}>
              <Legend $x={5} $ls={-0.3}>Colors</Legend>
              <ColorsInner>
                <SwatchRow>
                  <SwatchCell>
                    <SwatchLabel>Left:</SwatchLabel>
                    <Swatch $c="#222" />
                  </SwatchCell>
                  <SwatchCell>
                    <SwatchLabel $shift>Right:</SwatchLabel>
                    <Swatch $c="#fff" />
                  </SwatchCell>
                </SwatchRow>
                <Sunken $mt={6}>
                  <Palette>
                    {palette.map((c, i) => (
                      <Cell key={i} $c={c} />
                    ))}
                  </Palette>
                </Sunken>
                <Sunken $mt={6}>
                  <Spectrum />
                </Sunken>
              </ColorsInner>
            </Group>

            <Group $h={47} $top={12}>
              <Legend $x={5} $ls={-0.3}>Opacity</Legend>
              <NumberField value="255" top={11} left={7} />
              <Bar $top={1}><BarFill $w={71} /></Bar>
            </Group>

            <Group $h={51} $top={12} $left={4}>
              <Legend $x={5} $ls={-0.45}>Color Mode</Legend>
              <RadioRow $top={10}><Radio $on />Blend</RadioRow>
              <RadioRow $top={5}><Radio />Replace</RadioRow>
            </Group>

            <Group $h={121} $top={12}>
              <Legend $x={2} $pr={1} $ls={-0.45}>Onion Skin</Legend>
              <NumberField value="64" top={7} left={9} />
              <Bar $top={2}><BarFill $w={16} /></Bar>
              <SmallLabel $top={2}>Forward</SmallLabel>
              <NumberField value="0" top={-1} left={10} />
              <SmallLabel $top={3}>Backwards</SmallLabel>
              <NumberField value="0" top={0} left={9} />
            </Group>

            <Group $h={139} $top={13}>
              <Legend $x={2}>Preview</Legend>
              <PreviewChecker />
            </Group>
          </RightPanel>
        </Body>

        <StatusBar>
          <StatusCell $w={254} $pad={0}>Paint with the mouse, &lt;Shift&gt; for hor/vert</StatusCell>
          <StatusCell $w={94} $pad={4}>(54,4)</StatusCell>
          <StatusCell $w={85} $pad={4} $ls={-0.15}>Zoom: 1200%</StatusCell>
          <StatusCell $w={95} $pad={4} $ls={-0.05}>Size: 64 x 64</StatusCell>
          <StatusCell $pad={4} $ls={-0.4}>Memory: 16 KB</StatusCell>
        </StatusBar>

        <Taskbar>
          <Launchers>
            <StartOrb />
            <Explorer />
          </Launchers>
          <Task $w={159} $gap={0} $join $lead={6}>
            <TaskIcon $w={37}><Computer /></TaskIcon>
            <TaskLabel>Equipo</TaskLabel>
          </Task>
          <Task $w={159} $lead={8}>
            <TaskIcon $w={37}><Downloads /></TaskIcon>
            <TaskLabel>Descargas</TaskLabel>
          </Task>
          <Task $w={158}>
            <TaskIcon $w={35}><MediaPlayer /></TaskIcon>
            <TaskLabel>Reproductor de ...</TaskLabel>
          </Task>
          <Task $w={158} $lead={9}>
            <TaskIcon $w={35}><FlBox>Fl</FlBox></TaskIcon>
            <TaskLabel $ls={-0.25}>Untitled-1 (Canvas)</TaskLabel>
          </Task>
          <Task $w={158} $gap={1} $active $lead={8}>
            <TaskIcon $w={36}><GmLogo size={32} /></TaskIcon>
            <TaskLabel>Deeper.project.g...</TaskLabel>
          </Task>
          <Task $w={159} $lead={8}>
            <TaskIcon $w={37}><GmLogo size={32} /></TaskIcon>
            <TaskLabel $ls={-0.28}>Controller Test.pr...</TaskLabel>
          </Task>
          <Task $w={158} $lead={7}>
            <TaskIcon $w={37}><Bee /></TaskIcon>
            <TaskLabel $ls={-0.45}>Super Smash Bros...</TaskLabel>
          </Task>
          <Task $w={158} $lead={9}>
            <TaskIcon $w={36}><Chrome /></TaskIcon>
            <TaskLabel>TweetDeck - Goo...</TaskLabel>
          </Task>
          <Tray>
            <Language>ES</Language>
            <svg width="8" height="4" viewBox="0 0 8 4"><path d="M0 4l4-4 4 4z" fill="#fff" /></svg>
            <svg width="48" height="16" viewBox="0 0 48 16" fill="none">
              <path d="M20 4.500h10.500v7H21M26 12v2M21.500 14.500h9M15.500 1v4h4V1M17.500 5v9h4M14.500 2h6" stroke="#fff" strokeWidth="1.200" />
              <path d="M38 5h2l4-4v14l-4-4h-2z" fill="#fff" />
            </svg>
            <svg width="8" height="16" viewBox="0 0 8 16" fill="none">
              <path d="M0 5q2 3 0 6M3 3q4 5 0 10" stroke="#ccc" />
            </svg>
            <Clock>
              <div>11:36 p.m.</div>
              <div>23/01/2015</div>
            </Clock>
            <ShowDesktop />
          </Tray>
        </Taskbar>

        <ContextMenu>
          <MenuCheck>
            <Icon w={9} h={11} smooth>
              <path d="M0 6l2-1 1.500 3L8 0h1L4.500 11H3z" fill="#2020a0" />
            </Icon>
          </MenuCheck>
          <MenuLabel>Organizar iconos automáticamente</MenuLabel>
        </ContextMenu>

        <Player>
          <SmashArt />
          <PlayerMain>
            <PlayerInfo>
              <TrackText>
                <div>Fourside</div>
                <Artist>Super Smash Bros. Team</Artist>
                <Stars />
              </TrackText>
              <PlayerRight>
                <div>0:47/ 3:53</div>
                <Equalizer />
              </PlayerRight>
            </PlayerInfo>
            <Progress />
          </PlayerMain>
        </Player>

        <Stamp>2015-01-23 23:36:290.39</Stamp>
      </Screen>
    </>
  );
}
